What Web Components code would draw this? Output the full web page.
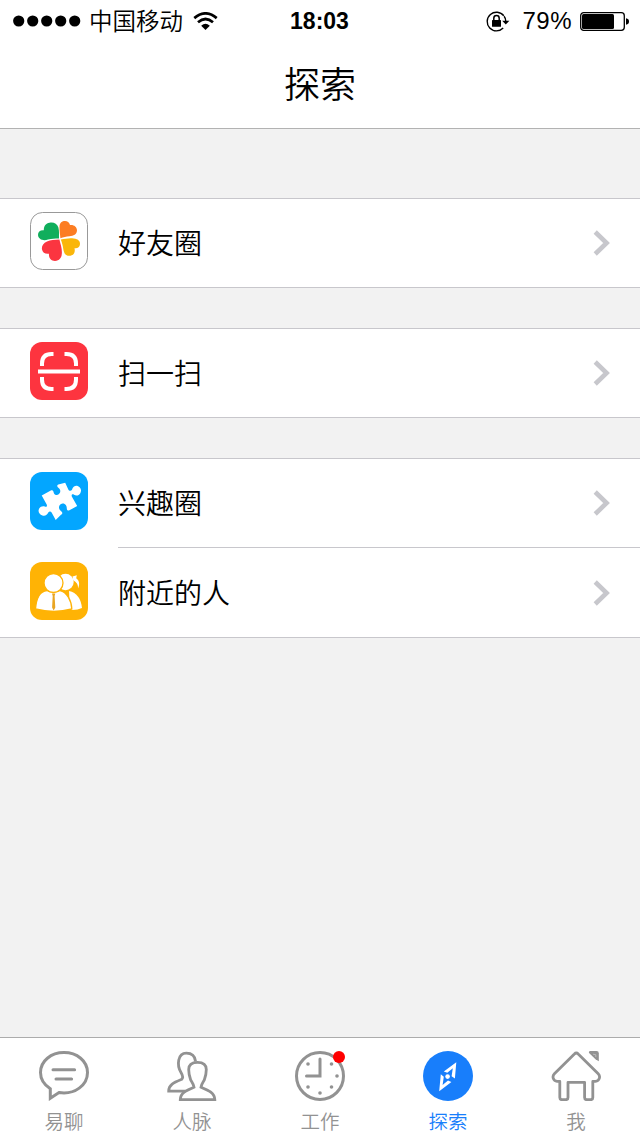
<!DOCTYPE html>
<html lang="zh-CN">
<head>
<meta charset="utf-8">
<title>探索</title>
<style>
  html, body {
    margin: 0;
    height: 100%;
  }

  body {
    font-family: "Liberation Sans", "Noto Sans CJK SC", sans-serif;
    color: #000;
    background: #f2f2f2;
    overflow: hidden;
  }
</style>
</head>
<body>
<explore-app></explore-app>

<script>
const ICONS = {
  clover: `
    <svg viewBox="0 0 58 58">
      <rect x=".5" y=".5" width="57" height="57" rx="12" fill="#fff" stroke="#999"/>
      <path fill="#10ae5c" d="M29 26.4C28.9 22 29.4 20 28.4 15.5C27 11.5 23.5 10 19.5 10.8C16 11.3 13.8 14 13.8 18.3C10 18 8 20 8 23C8.3 27.5 13.5 29.3 18 27.5C22 26.5 24.5 26.6 29 26.4Z"/>
      <path fill="#fc7d23" d="M30.4 26.2C30 22 29.4 19 29.5 14.5C29.8 10.5 32 9 35 9C37.5 9 39.3 10.5 40 13C43.5 12.4 47 14.6 47 18.3C46.8 22.5 43.5 24 39.5 24.3C36 24.7 33.5 25.2 30.4 26.2Z"/>
      <path fill="#fab60a" d="M30.8 27.4C35 27 38 26 42 26.3C47 26.5 50.2 28.5 50 32C49.8 35.5 47 36.8 44.5 36.2C45.5 40 44 43.7 39 43.8C35 43.8 33.8 40.5 33.2 36.5C32.8 33 32 30.5 30.8 27.4Z"/>
      <path fill="#fb3540" d="M29.4 27.6C24 28 21 28 17 29.5C13 31.2 11.4 34.5 12 37.5C12.6 40.5 15 42.2 19 41.7C18.5 46 21 49 25 49C30 48.8 31.9 45 31.9 40.5C31.9 35.5 30.4 32 29.4 27.6Z"/>
    </svg>`,
  scan: `
    <svg viewBox="0 0 58 58">
      <rect width="58" height="58" rx="12" fill="#fd343f"/>
      <g fill="none" stroke="#fff" stroke-width="4">
        <path d="M12 24V21.5Q12 12 21.5 12H23.5M34.5 12H36.5Q46 12 46 21.5V24M46 35V37.5Q46 47 36.5 47H34.5M23.5 47H21.5Q12 47 12 37.5V35"/>
        <path d="M8 29.5H50"/>
      </g>
    </svg>`,
  puzzle: `
    <svg viewBox="0 0 58 58">
      <rect width="58" height="58" rx="12" fill="#03a6ff"/>
      <path fill="#fff" d="M11.7 23.6L20.8 18.4C22 17.8 23.3 18.5 23.5 19.8C23.8 21.9 24.8 23.4 27 23C29.7 22.5 31 20 29.9 17.6C29.3 16 27.4 15.5 27.2 14C27.2 13.4 27.7 12.9 28.3 12.6L35.2 10.8L38.2 17.2C39 19 41 19.3 42 17.7C42.8 15 45 13.4 47.6 14C50.5 14.8 52 18.2 50.3 21.2C48.8 23.8 46 24 44 22.7C42.5 21.8 41.2 22.8 41.8 24.5L47.2 34L39.4 38.3C38 39 36.9 38.1 36.8 36.7C37 34.2 35.5 31.2 32.5 31.5C29.8 31.8 28.2 34.5 29.4 37.2C30.2 39 32.6 39.6 32.3 41.2C32.2 42 31.6 42.4 31 42.8L25.7 48L21.6 40.4C20.7 39 19 39.3 18.3 40.5C17.3 43 15 44.3 12.4 43.5C9 42.5 7.6 39.2 9.2 36.5C10.6 34.2 13.2 33.8 15.2 34.7C16.8 35.3 17.3 34 16.7 32.5Z"/>
    </svg>`,
  people: `
    <svg viewBox="0 0 58 58">
      <rect width="58" height="58" rx="12" fill="#ffb305"/>
      <g fill="#fff">
        <circle cx="35.5" cy="20" r="8.2"/>
        <path d="M39 29C47 30.5 51 37 52 46Q47 48.5 40 48Z"/>
        <path d="M42.5 14.5L46.8 13.2L46.2 16.2C49.5 18.7 50 22.4 48 26.5C48.3 22.7 46.7 21.1 45 19.6L43.2 18.2Z"/>
      </g>
      <path fill="#fff" stroke="#ffb305" stroke-width="1.3" d="M5.5 47C6.3 36.5 10.2 29 17 28.5Q23.3 32 30 28.5C36.8 30 41.5 38.5 41.8 47Q24 52 5.5 47Z"/>
      <circle cx="23.5" cy="21" r="9.5" fill="#fff" stroke="#ffb305" stroke-width="1.3"/>
      <path fill="#e9a522" d="M22 31.5H25.3L24.6 34L25.3 45.5L23.7 48.5L22.1 45.5L22.7 34Z"/>
    </svg>`,
  chat: `
    <svg viewBox="0 0 50 50" fill="none" stroke="#929292" stroke-width="3">
      <path d="M11.3 37.8V47.3L20 41.6C36 44 48.5 34 48.5 21.5C48.5 10 38 1.6 25 1.6S1.5 10 1.5 21.5C1.5 28 5.5 34 11.3 37.8Z"/>
      <path stroke-linecap="round" d="M14 18.7H35.6M17 28H32.6"/>
    </svg>`,
  contacts: `
    <svg viewBox="0 0 50 50" fill="none" stroke="#929292" stroke-width="2.8">
      <path d="M18.5 40.1H1.7C1.7 33.5 7 31.5 14.8 28.3C16.5 26.5 15.5 24 14 21.5C9.5 14 10.8 2.2 19.3 2.2C24.5 2.2 28 5 28.6 10.5"/>
      <path d="M13.3 48.6H47.8C47.5 42 42 39.5 34 36.2C34.7 32.5 35.5 32 37.3 29C38.8 25 39.3 22 39.3 18.5C39.3 14 36.2 11.3 30.5 11.3S21.7 14 21.7 18.5C21.7 22 22.2 25 23.7 29C25.5 32 26.3 32.5 27 36.2C19 39.5 13.5 42 13.3 48.6Z"/>
    </svg>`,
  clock: `
    <svg viewBox="0 0 50 50" fill="none" stroke="#929292" stroke-width="3">
      <circle cx="25" cy="25" r="23.5"/>
      <path stroke-linecap="round" d="M25 8V25H11.5"/>
      <g fill="#929292" stroke="none">
        <circle cx="13" cy="13" r="1.8"/>
        <circle cx="36.5" cy="13" r="1.8"/>
        <circle cx="42" cy="25" r="1.8"/>
        <circle cx="36.5" cy="36" r="1.8"/>
        <circle cx="25" cy="42" r="1.8"/>
        <circle cx="13" cy="36" r="1.8"/>
      </g>
    </svg>`,
  compass: `
    <svg viewBox="0 0 50 50">
      <circle cx="25" cy="25" r="25" fill="#187efb"/>
      <path fill="#fff" fill-rule="evenodd" d="M33.3 11.2L31.9 27.6L28.6 25.2L29.8 17.2L24.3 21.8L20.8 20.6ZM16.2 40.3L17.8 23.2L20.8 25.8L19.6 34L25 29.6L28.4 31Z"/>
      <circle cx="24.6" cy="25.6" r="2.3" fill="#fff"/>
    </svg>`,
  home: `
    <svg viewBox="0 0 50 50" fill="none" stroke="#929292" stroke-width="2.8" stroke-linejoin="round">
      <path d="M23.4 3Q25.3 1 27.2 3L47.2 22.7C49.8 25.4 48.5 30 44.5 30.4H41.8V46.5Q41.8 48.7 39.7 48.7H35.7Q33.6 48.7 33.6 46.5V31.3H17V46.5Q17 48.7 14.9 48.7H10.9Q8.8 48.7 8.8 46.5V30.4H6.1C2.1 30 .8 25.4 3.4 22.7Z"/>
      <path fill="#929292" stroke="none" d="M38.5 0H45.5Q47.8 0 47.8 2.3V10.2L44.5 8.2L37.8 1.7Z"/>
      <path stroke="#bbb" stroke-width="1" d="M42 3.2L44.8 3.7L44.8 6"/>
    </svg>`
};

class StatusBar extends HTMLElement {
  constructor() {
    super();
    this.attachShadow({ mode: 'open' }).innerHTML = `
      <style>
        :host {
          display: grid;
          grid-template-columns: 1fr auto 1fr;
          align-items: center;
          height: 40px;
          padding: 0 11px 0 13px;
          font-size: 24px;
          line-height: 40px;
        }

        svg {
          display: block;
          flex: none;
        }

        .left, .right {
          display: flex;
          align-items: center;
        }

        .right {
          justify-content: flex-end;
        }

        .carrier {
          margin: 2px 10px 0 8px;
          font-size: 23.5px;
          font-weight: 350;
        }

        .time {
          padding-right: 3px;
          font-size: 23px;
          font-weight: bold;
        }

        .percent {
          margin: 0 8px 0 12px;
          font-size: 24px;
          letter-spacing: .5px;
        }
      </style>
      <div class="left">
        <svg width="68" height="12">
          <circle cx="5.7" cy="6" r="5.6"/>
          <circle cx="19.7" cy="6" r="5.6"/>
          <circle cx="33.7" cy="6" r="5.6"/>
          <circle cx="47.7" cy="6" r="5.6"/>
          <circle cx="61.7" cy="6" r="5.6"/>
        </svg>
        <span class="carrier">中国移动</span>
        <svg width="25" height="18" viewBox="0 0 25 18">
          <g fill="none" stroke="#000" stroke-width="2.7">
            <path d="M1.3 6.1Q12.5-3.4 23.7 6.1"/>
            <path d="M5 10.2Q12.5 3.8 20 10.2"/>
          </g>
          <path d="M8.2 13.7Q12.5 9.9 16.8 13.7L12.5 18Z"/>
        </svg>
      </div>
      <div class="time">18:03</div>
      <div class="right">
        <svg width="24" height="21" viewBox="0 0 24 21">
          <path fill="none" stroke="#000" stroke-width="1.4" d="M17.8 4.8A9.3 9.3 0 1 0 17.2 17M18.1 5.2Q19.8 7.3 19.8 10.5"/>
          <path d="M16.2 9.8H23.4L19.8 13.5Z"/>
          <rect x="6" y="9" width="9" height="6.8" rx=".5"/>
          <path fill="none" stroke="#000" stroke-width="1.5" d="M7.8 9.5V7.3A2.7 2.7 0 0 1 13.2 7.3V9.5"/>
        </svg>
        <span class="percent">79%</span>
        <svg width="49" height="19" viewBox="0 0 49 19">
          <rect x=".7" y=".7" width="43.6" height="17.6" rx="3" fill="none" stroke="#000" stroke-width="1.3"/>
          <rect x="2" y="2" width="32" height="15" rx="1.5"/>
          <path d="M46 6.2Q49 6.8 49 9.5T46 12.8Z"/>
        </svg>
      </div>
    `;
  }
}

class NavHeader extends HTMLElement {
  constructor() {
    super();
    this.attachShadow({ mode: 'open' }).innerHTML = `
      <style>
        :host {
          display: block;
          box-sizing: border-box;
          height: 89px;
          padding-top: 2px;
          border-bottom: 1px solid #b2b2b2;
          font-size: 36px;
          font-weight: 350;
          line-height: 88px;
          text-align: center;
        }
      </style>
      <slot></slot>
    `;
  }
}

class CellGroup extends HTMLElement {
  constructor() {
    super();
    this.attachShadow({ mode: 'open' }).innerHTML = `
      <style>
        :host {
          display: block;
          box-sizing: border-box;
          border: solid #c8c7cc;
          border-width: 1px 0;
          background: #fff;
        }
      </style>
      <slot></slot>
    `;
  }
}

class MenuCell extends HTMLElement {
  constructor() {
    super();
    this.attachShadow({ mode: 'open' }).innerHTML = `
      <style>
        :host {
          display: flex;
          height: 88px;
          padding-left: 30px;
        }

        :host(:nth-of-type(2)) {
          height: 90px;
        }

        .icon svg {
          display: block;
          width: 58px;
          height: 58px;
          margin-top: 13px;
        }

        :host(:nth-of-type(2)) .icon svg {
          margin-top: 15px;
        }

        .content {
          flex: 1;
          display: flex;
          align-items: center;
          justify-content: space-between;
          margin-left: 30px;
          padding-right: 30px;
          font-size: 28px;
          font-weight: 350;
        }

        .label {
          padding-bottom: 2px;
        }

        :host(:nth-of-type(2)) .content {
          border-top: 1px solid #c8c7cc;
        }
      </style>
      <div class="icon">${ICONS[this.getAttribute('icon')]}</div>
      <div class="content">
        <span class="label"><slot></slot></span>
        <svg width="17" height="26" fill="none" stroke="#c7c7cc" stroke-width="4.6">
          <path d="M2.2 2L13.6 13L2.2 24"/>
        </svg>
      </div>
    `;
  }
}

class TabItem extends HTMLElement {
  constructor() {
    super();
    this.attachShadow({ mode: 'open' }).innerHTML = `
      <style>
        :host {
          display: flex;
          flex-direction: column;
          align-items: center;
          padding-top: 13px;
          color: #929292;
          font-size: 19.5px;
          font-weight: 350;
          line-height: 28px;
        }

        :host([active]) {
          color: #187efb;
        }

        .icon {
          position: relative;
          height: 50px;
          margin-bottom: 7px;
        }

        .icon svg {
          display: block;
          width: 50px;
          height: 50px;
        }

        .badge {
          display: none;
          position: absolute;
          top: 0;
          right: 0;
          width: 12px;
          height: 12px;
          border-radius: 50%;
          background: #f00;
        }

        :host([badge]) .badge {
          display: block;
        }
      </style>
      <div class="icon">
        ${ICONS[this.getAttribute('icon')]}
        <span class="badge"></span>
      </div>
      <span><slot></slot></span>
    `;
  }
}

class TabBar extends HTMLElement {
  constructor() {
    super();
    this.attachShadow({ mode: 'open' }).innerHTML = `
      <style>
        :host {
          display: grid;
          grid-template-columns: repeat(5, 1fr);
          height: 98px;
          border-top: 1px solid #acacac;
          background: #fff;
        }
      </style>
      <slot></slot>
    `;
  }
}

class ExploreApp extends HTMLElement {
  constructor() {
    super();
    this.attachShadow({ mode: 'open' }).innerHTML = `
      <style>
        :host {
          display: flex;
          flex-direction: column;
          width: 640px;
          height: 1136px;
        }

        header {
          background: #fff;
        }

        main {
          flex: 1;
          display: flex;
          flex-direction: column;
          gap: 40px;
          padding-top: 69px;
        }
      </style>
      <header>
        <status-bar></status-bar>
        <nav-header>探索</nav-header>
      </header>
      <main>
        <cell-group>
          <menu-cell icon="clover">好友圈</menu-cell>
        </cell-group>
        <cell-group>
          <menu-cell icon="scan">扫一扫</menu-cell>
        </cell-group>
        <cell-group>
          <menu-cell icon="puzzle">兴趣圈</menu-cell>
          <menu-cell icon="people">附近的人</menu-cell>
        </cell-group>
      </main>
      <tab-bar>
        <tab-item icon="chat">易聊</tab-item>
        <tab-item icon="contacts">人脉</tab-item>
        <tab-item icon="clock" badge>工作</tab-item>
        <tab-item icon="compass" active>探索</tab-item>
        <tab-item icon="home">我</tab-item>
      </tab-bar>
    `;
  }
}

customElements.define('status-bar', StatusBar);
customElements.define('nav-header', NavHeader);
customElements.define('cell-group', CellGroup);
customElements.define('menu-cell', MenuCell);
customElements.define('tab-item', TabItem);
customElements.define('tab-bar', TabBar);
customElements.define('explore-app', ExploreApp);
</script>
</body>
</html>
